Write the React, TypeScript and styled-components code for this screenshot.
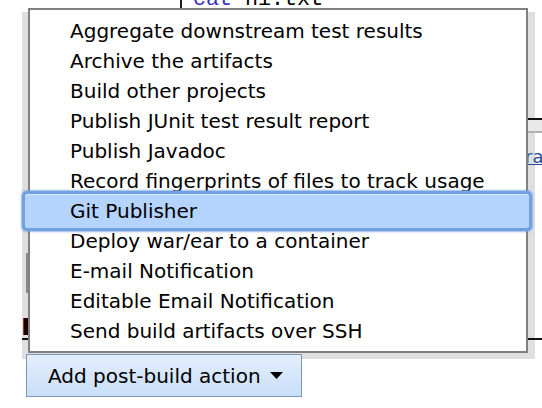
import React from "react";
import styled, { createGlobalStyle } from "styled-components";

const Global = createGlobalStyle`
  html, body { margin: 0; padding: 0; background: #ffffff; }
  body { font-family: "DejaVu Sans", Verdana, sans-serif; }
`;

const Page = styled.div`
  position: relative;
  width: 542px;
  height: 408px;
  overflow: hidden;
  background: #ffffff;
`;

const Backdrop = styled.div`
  display: flex;
  flex-direction: column;
  align-items: flex-start;
`;

const CodeRow = styled.div`
  height: 8px;
  margin-left: 180px;
  padding-left: 11px;
  border-left: 2px solid #1c1c1c;
  overflow: hidden;
`;

const CodeText = styled.div`
  margin-top: -6px;
  font-family: "Liberation Mono", "Courier New", monospace;
  font-size: 21.7px;
  line-height: 12px;
  color: #000;
  white-space: pre;
`;

const Keyword = styled.span`
  color: #3f2fc4;
`;

const Panel = styled.div`
  margin-top: 4px;
  margin-left: 22px;
  width: 513px;
  height: 347px;
  background: #dfdfdf;
  display: flex;
  flex-direction: column;
  align-items: flex-start;
`;

const Rule = styled.div<{ $top: number; $left: number; $width: number }>`
  margin-top: ${(p) => p.$top}px;
  margin-left: ${(p) => p.$left}px;
  width: ${(p) => p.$width}px;
  height: 2px;
  background: #111;
  flex: none;
`;

const HeaderStrip = styled.div`
  margin-left: 200px;
  width: 320px;
  height: 11px;
  background: #e9e9e9;
  border-bottom: 2px solid #b2b2b2;
  flex: none;
`;

const LinkRow = styled.div`
  margin-top: 14px;
  margin-left: 503px;
  font-size: 18px;
  line-height: 20px;
  white-space: nowrap;
`;

const Link = styled.a`
  color: #234d9c;
  text-decoration: underline;
`;

const ScrollThumb = styled.div`
  margin-top: 86px;
  margin-left: 4px;
  width: 2px;
  height: 40px;
  background: #8a8a8a;
  flex: none;
`;

const DarkField = styled.div`
  margin-top: 25px;
  margin-left: 1px;
  width: 40px;
  height: 17px;
  background: #1a0202;
  border-left: 1px solid #8a3a2a;
  flex: none;
`;

const AddButton = styled.button`
  margin-top: -5px;
  margin-left: 26px;
  width: 276px;
  height: 43px;
  box-sizing: border-box;
  display: inline-flex;
  align-items: center;
  gap: 9px;
  padding: 0 0 0 21px;
  border: 1px solid #7d97ba;
  background: linear-gradient(#e3eefc, #c9dff9);
  font-family: "DejaVu Sans", Verdana, sans-serif;
  font-size: 20px;
  color: #000;
  position: relative;
`;

const Menu = styled.ul`
  position: absolute;
  left: 28px;
  top: 8px;
  width: 500px;
  height: 345px;
  box-sizing: border-box;
  margin: 0;
  padding: 6px 0 0;
  list-style: none;
  background: #ffffff;
  border: 2px solid #808080;
`;

const Item = styled.li<{ $selected?: boolean }>`
  position: relative;
  height: 30px;
  line-height: 30px;
  padding-left: 40px;
  font-size: 20px;
  color: #000;
  white-space: nowrap;

  span {
    position: relative;
  }

  ${(p) =>
    p.$selected &&
    `
    &::before {
      content: "";
      position: absolute;
      left: -8px;
      right: -6px;
      top: -5px;
      bottom: -5px;
      border: 3px solid rgba(100, 152, 222, 0.85);
      border-radius: 5px;
      background: #b4d4fd;
      box-shadow: 0 0 2px 1px rgba(110, 160, 225, 0.7), inset 0 1px 0 #d8e8ff;
    }
  `}
`;

const items = [
  "Aggregate downstream test results",
  "Archive the artifacts",
  "Build other projects",
  "Publish JUnit test result report",
  "Publish Javadoc",
  "Record fingerprints of files to track usage",
  "Git Publisher",
  "Deploy war/ear to a container",
  "E-mail Notification",
  "Editable Email Notification",
  "Send build artifacts over SSH",
];

export default function App() {
  return (
    <>
      <Global />
      <Page>
        <Backdrop>
          <CodeRow>
            <CodeText>
              <Keyword>cat</Keyword> hi.txt
            </CodeText>
          </CodeRow>
          <Panel>
            <Rule $top={106} $left={200} $width={320} />
            <HeaderStrip />
            <LinkRow>
              <Link>ra</Link>
            </LinkRow>
            <ScrollThumb />
            <DarkField />
            <Rule $top={3} $left={0} $width={520} />
          </Panel>
          <AddButton>
            Add post-build action
            <svg width="13" height="7" viewBox="0 0 13 7">
              <path d="M0 0 L13 0 L6.5 7 Z" fill="#000" />
            </svg>
          </AddButton>
        </Backdrop>
        <Menu>
          {items.map((t) => (
            <Item key={t} $selected={t === "Git Publisher"}>
              <span>{t}</span>
            </Item>
          ))}
        </Menu>
      </Page>
    </>
  );
}
